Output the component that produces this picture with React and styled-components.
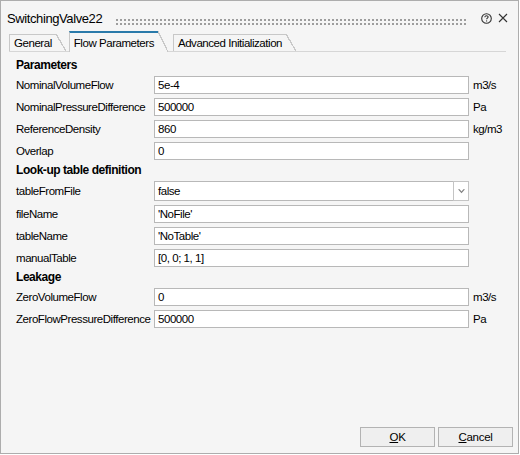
import React from "react";
import styled, { createGlobalStyle } from "styled-components";

const Global = createGlobalStyle`
  html, body { margin: 0; padding: 0; background: #ffffff; }
  body { font-family: "Liberation Sans", Arial, sans-serif; color: #000; }
`;

const BG = "#f5f5f5";
const TAB_BORDER = "#c8c8c8";

const Window = styled.div`
  width: 519px;
  height: 454px;
  box-sizing: border-box;
  border: 1px solid #adadad;
  background: ${BG};
  display: flex;
  flex-direction: column;
  font-size: 11.5px;
  letter-spacing: -0.45px;
`;

const TitleBar = styled.div`
  height: 30px;
  box-sizing: border-box;
  padding: 6px 10px 0 6px;
  display: flex;
  align-items: center;
  gap: 14px;
`;

const Title = styled.div`
  font-size: 13px;
  letter-spacing: -0.4px;
  line-height: 16px;
  white-space: nowrap;
`;

const Grip = styled.div`
  flex: 1;
  height: 6px;
  margin-top: 5px;
  background-image: radial-gradient(circle at 1px 1px, #9d9d9d 0.9px, transparent 1.1px);
  background-size: 4px 4px;
`;

const TitleIcons = styled.div`
  display: flex;
  align-items: center;
  gap: 6px;
  margin-bottom: 2px;
  color: #333;
`;

const TabBar = styled.div`
  height: 20px;
  margin: 0 12px 0 8px;
  border-bottom: 1px solid #d6d6d6;
  display: flex;
  align-items: flex-end;
`;

const Tab = styled.div`
  display: flex;
  align-items: stretch;
  height: ${(p) => (p.$active ? "21px" : "17px")};
  margin-bottom: ${(p) => (p.$active ? "-1px" : "0")};
  margin-right: ${(p) => (p.$active ? "5px" : "3px")};
  position: relative;
  z-index: ${(p) => (p.$active ? 1 : 0)};
`;

const TabBody = styled.div`
  box-sizing: border-box;
  border-left: 1px solid ${TAB_BORDER};
  border-top: ${(p) => (p.$active ? "2px solid #2a7aaa" : `1px solid ${TAB_BORDER}`)};
  background: ${BG};
  padding: 0 4px 0 4px;
  display: flex;
  align-items: center;
  white-space: nowrap;
`;

const TabEdge = styled.div`
  width: 10px;
  background: linear-gradient(
    to top right,
    ${BG} calc(50% - 0.7px),
    ${TAB_BORDER} calc(50% - 0.7px),
    ${TAB_BORDER} calc(50% + 0.6px),
    transparent calc(50% + 0.6px)
  );
`;

const Body = styled.div`
  flex: 1;
  padding: 7px 0 0 15px;
  display: grid;
  grid-template-columns: 138px 315px auto;
  grid-auto-rows: min-content;
  row-gap: 4px;
  align-content: start;
`;

const SectionHeader = styled.div`
  grid-column: 1 / -1;
  font-weight: bold;
  font-size: 12px;
  height: 13px;
  line-height: 13px;
`;

const Label = styled.div`
  display: flex;
  align-items: center;
  white-space: nowrap;
`;

const Input = styled.div`
  height: 18px;
  box-sizing: border-box;
  border: 1px solid #b8b8b8;
  background: #fff;
  padding: 0 3px;
  display: flex;
  align-items: center;
  white-space: nowrap;
`;

const Combo = styled.div`
  height: 20px;
  display: flex;
`;

const ComboField = styled(Input)`
  flex: 1;
  height: 20px;
  border-right: none;
`;

const ComboButton = styled.div`
  width: 16px;
  box-sizing: border-box;
  border: 1px solid #c4c4c4;
  background: #fff;
  display: flex;
  align-items: center;
  justify-content: center;
`;

const Unit = styled.div`
  display: flex;
  align-items: center;
  padding-left: 4px;
  white-space: nowrap;
`;

const Footer = styled.div`
  display: flex;
  justify-content: flex-end;
  gap: 3px;
  padding: 0 5px 6px 0;
`;

const Button = styled.button`
  width: 75px;
  height: 20px;
  box-sizing: border-box;
  border: 1px solid #b3b3b3;
  background: #efefef;
  font-family: "Liberation Sans", Arial, sans-serif;
  font-size: 11.5px;
  letter-spacing: -0.3px;
  color: #000;
  padding: 0;
  u { text-underline-offset: 1px; }
`;

const params = [
  { type: "header", text: "Parameters" },
  { label: "NominalVolumeFlow", value: "5e-4", unit: "m3/s" },
  { label: "NominalPressureDifference", value: "500000", unit: "Pa" },
  { label: "ReferenceDensity", value: "860", unit: "kg/m3" },
  { label: "Overlap", value: "0" },
  { type: "header", text: "Look-up table definition" },
  { label: "tableFromFile", value: "false", combo: true },
  { label: "fileName", value: "'NoFile'" },
  { label: "tableName", value: "'NoTable'" },
  { label: "manualTable", value: "[0, 0; 1, 1]" },
  { type: "header", text: "Leakage" },
  { label: "ZeroVolumeFlow", value: "0", unit: "m3/s" },
  { label: "ZeroFlowPressureDifference", value: "500000", unit: "Pa" },
];

function HelpIcon() {
  return (
    <svg width="11" height="11" viewBox="0 0 11 11" fill="none" stroke="currentColor">
      <circle cx="5.5" cy="5.5" r="4.8" strokeWidth="1.1" />
      <path d="M3.9 4.3 C3.9 3.3 4.6 2.8 5.5 2.8 C6.4 2.8 7.1 3.3 7.1 4.1 C7.1 5.1 5.6 5.2 5.6 6.3" strokeWidth="1.1" />
      <circle cx="5.6" cy="7.9" r="0.6" fill="currentColor" stroke="none" />
    </svg>
  );
}

function CloseIcon() {
  return (
    <svg width="10" height="10" viewBox="0 0 10 10" stroke="currentColor" strokeWidth="1.1">
      <path d="M1 1 L9 9 M9 1 L1 9" />
    </svg>
  );
}

function Chevron() {
  return (
    <svg width="7" height="5" viewBox="0 0 7 5">
      <path d="M0 0.3 L3.5 4.3 L7 0.3 L5.4 0.3 L3.5 2.4 L1.6 0.3 Z" fill="#7f7f7f" />
    </svg>
  );
}

export default function App() {
  const tabs = ["General", "Flow Parameters", "Advanced Initialization"];
  return (
    <>
      <Global />
      <Window>
        <TitleBar>
          <Title>SwitchingValve22</Title>
          <Grip />
          <TitleIcons>
            <HelpIcon />
            <CloseIcon />
          </TitleIcons>
        </TitleBar>
        <TabBar>
          {tabs.map((t) => (
            <Tab key={t} $active={t === "Flow Parameters"}>
              <TabBody $active={t === "Flow Parameters"}>{t}</TabBody>
              <TabEdge />
            </Tab>
          ))}
        </TabBar>
        <Body>
          {params.map((p, i) =>
            p.type === "header" ? (
              <SectionHeader key={i}>{p.text}</SectionHeader>
            ) : (
              <React.Fragment key={i}>
                <Label>{p.label}</Label>
                {p.combo ? (
                  <Combo>
                    <ComboField>{p.value}</ComboField>
                    <ComboButton>
                      <Chevron />
                    </ComboButton>
                  </Combo>
                ) : (
                  <Input>{p.value}</Input>
                )}
                <Unit>{p.unit || ""}</Unit>
              </React.Fragment>
            )
          )}
        </Body>
        <Footer>
          <Button>
            <u>O</u>K
          </Button>
          <Button>
            <u>C</u>ancel
          </Button>
        </Footer>
      </Window>
    </>
  );
}
